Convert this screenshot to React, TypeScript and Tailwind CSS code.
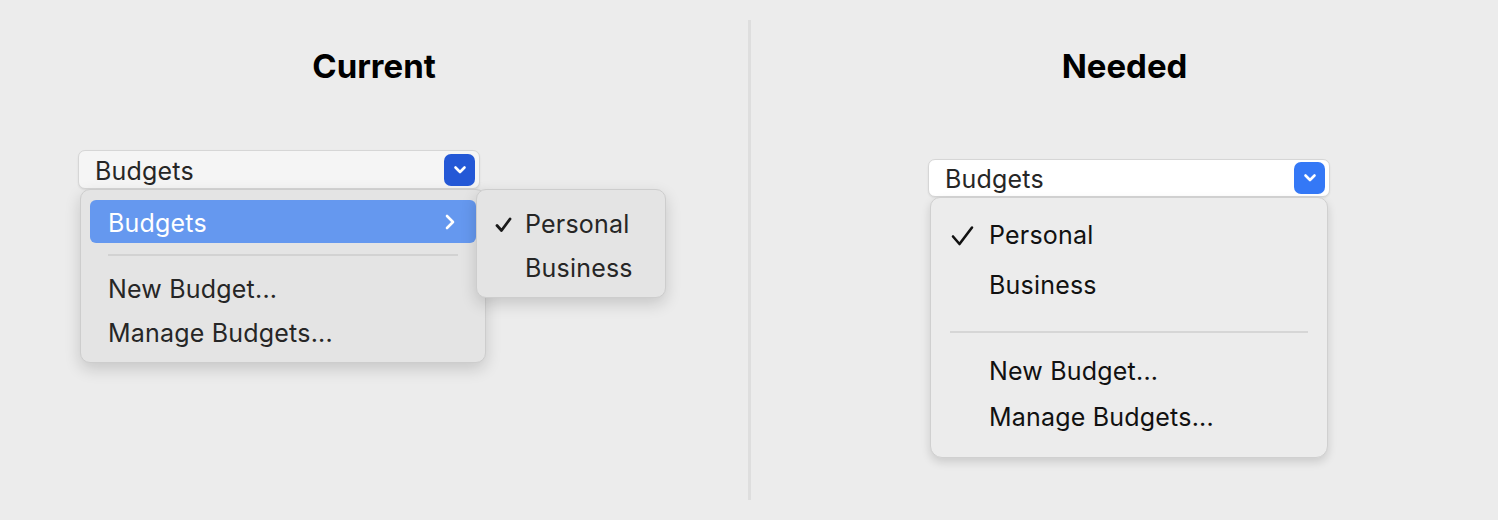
import React from "react";

const font = { fontFamily: "Inter, 'Noto Sans', sans-serif" };

function ChevronDown() {
	return (
		<svg width="14" height="10" viewBox="0 0 14 10" fill="none">
			<path d="M2.5 2.5 L7 7 L11.5 2.5" stroke="white" strokeWidth="2.6" strokeLinecap="round" strokeLinejoin="round" />
		</svg>
	);
}

function SelectButton({ white, blue }: { white?: boolean; blue: string }) {
	return (
		<div
			className={`flex items-center justify-between w-[402px] rounded-[7px] border border-[#d6d6d6] pl-[16px] pr-[4px] shadow-[0_1px_2px_rgba(0,0,0,0.08)] ${
				white ? "bg-white h-[38px]" : "bg-[#f5f5f5] h-[39px]"
			}`}>
			<span className="pt-[3px] text-[25px] tracking-[0.2px] text-[#262626] leading-none">Budgets</span>
			<div className={`w-[31px] h-[32px] rounded-[7px] flex items-center justify-center ${blue}`}>
				<ChevronDown />
			</div>
		</div>
	);
}

function CurrentSide() {
	return (
		<div className="w-[748px] flex flex-col">
			<h2 className="mt-[46px] text-center text-[33px] leading-[40px] font-bold text-black">Current</h2>

			<div className="relative ml-[78px] mt-[64px] w-[410px]">
				<SelectButton blue="bg-[#2458d6]" />

				{/* main menu */}
				<div className="ml-[2px] w-[406px] rounded-[10px] border border-[#cdcdcd] bg-[#e4e4e4] pt-[10px] pb-[8px] shadow-[0_6px_16px_rgba(0,0,0,0.16)]">
					<div className="mx-[9px] h-[43px] rounded-[6px] bg-[#6598ef] flex items-center justify-between pl-[18px] pr-[20px]">
						<span className="pt-[3px] text-[25px] tracking-[0.2px] text-white leading-none">Budgets</span>
						<svg width="12" height="18" viewBox="0 0 12 18" fill="none">
							<path d="M3 3 L9 9 L3 15" stroke="white" strokeWidth="2.6" strokeLinecap="round" strokeLinejoin="round" />
						</svg>
					</div>
					<div className="mx-[27px] mt-[11px] h-[2px] bg-[#d2d2d2]" />
					<div className="mt-[10px] h-[44px] flex items-center pt-[3px] pl-[27px] text-[25px] tracking-[0.2px] text-[#262626]">New Budget...</div>
					<div className="h-[44px] flex items-center pt-[3px] pl-[27px] text-[25px] tracking-[0.2px] text-[#262626]">Manage Budgets...</div>
				</div>

				{/* submenu */}
				<div className="absolute left-[398px] top-[39px] w-[190px] rounded-[10px] border border-[#cdcdcd] bg-[#e4e4e4] pt-[11px] pb-[8px] shadow-[0_6px_16px_rgba(0,0,0,0.16)]">
					<div className="h-[44px] flex items-center pt-[3px]">
						<span className="w-[48px] pl-[18px]">
							<svg width="17" height="16" viewBox="0 0 17 16" fill="none">
								<path d="M2 8.5 L6.5 13.5 L15 2" stroke="#1a1a1a" strokeWidth="2.8" strokeLinecap="round" strokeLinejoin="round" />
							</svg>
						</span>
						<span className="text-[25px] tracking-[0.2px] text-[#262626]">Personal</span>
					</div>
					<div className="h-[44px] flex items-center pt-[3px] pl-[48px] text-[25px] tracking-[0.2px] text-[#262626]">Business</div>
				</div>
			</div>
		</div>
	);
}

function NeededSide() {
	return (
		<div className="flex-1 flex flex-col">
			<h2 className="mt-[46px] text-center text-[33px] leading-[40px] font-bold text-black">Needed</h2>

			<div className="ml-[177px] mt-[73px] w-[402px]">
				<SelectButton white blue="bg-[#3478f6]" />
				<div className="ml-[2px] w-[398px] rounded-b-[12px] rounded-t-[10px] border border-[#d0d0d0] bg-[#ececec] pt-[12px] pb-[17px] shadow-[0_4px_10px_rgba(0,0,0,0.14)]">
					<div className="h-[50px] flex items-center pt-[2px]">
						<span className="w-[58px] pl-[20px]">
							<svg width="24" height="22" viewBox="0 0 24 22" fill="none">
								<path d="M2 11.5 L8.5 19 L21 2.5" stroke="#111" strokeWidth="2.6" strokeLinecap="round" strokeLinejoin="round" />
							</svg>
						</span>
						<span className="text-[25px] tracking-[0.2px] text-[#111]">Personal</span>
					</div>
					<div className="h-[50px] flex items-center pt-[2px] pl-[58px] text-[25px] tracking-[0.2px] text-[#111]">Business</div>
					<div className="mx-[19px] mt-[21px] h-[2px] bg-[#d6d6d6]" />
					<div className="mt-[15px] h-[46px] flex items-center pt-[2px] pl-[58px] text-[25px] tracking-[0.2px] text-[#111]">New Budget...</div>
					<div className="h-[46px] flex items-center pt-[2px] pl-[58px] text-[25px] tracking-[0.2px] text-[#111]">Manage Budgets...</div>
				</div>
			</div>
		</div>
	);
}

export default function App() {
	return (
		<div className="w-[1498px] h-[520px] bg-[#ececec] flex overflow-hidden" style={font}>
			<CurrentSide />
			<div className="w-[3px] my-[20px] bg-[#dedede]" />
			<NeededSide />
		</div>
	);
}
